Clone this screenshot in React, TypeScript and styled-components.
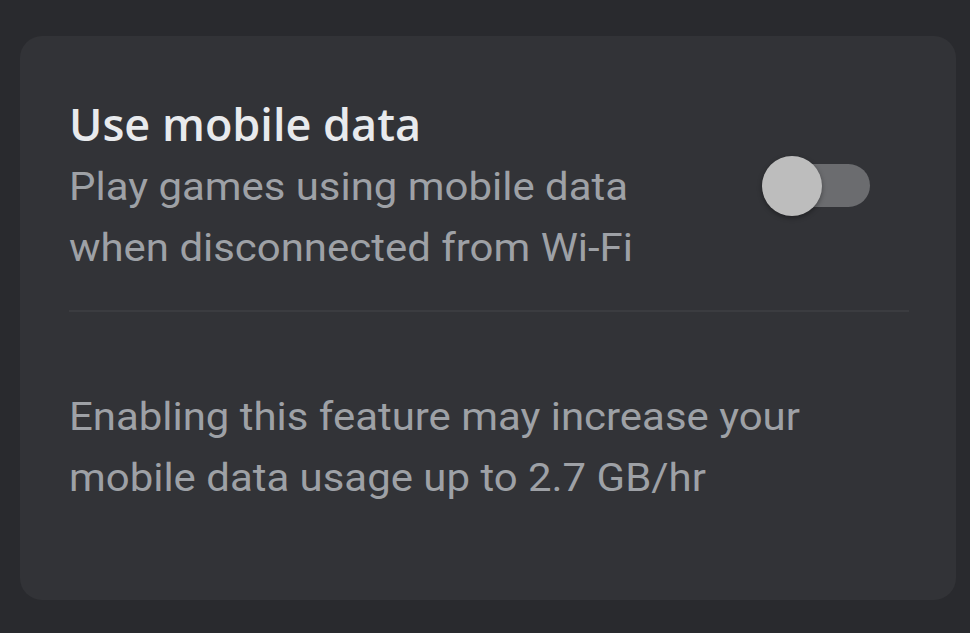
import styled, { createGlobalStyle } from "styled-components";

const GlobalStyle = createGlobalStyle`
  html, body {
    margin: 0;
    padding: 0;
    background: #292a2e;
  }
`;

const Page = styled.div`
  width: 970px;
  height: 633px;
  padding: 36px 14px 33px 20px;
  box-sizing: border-box;
`;

const Card = styled.section`
  height: 100%;
  background: #323337;
  border-radius: 22px;
  padding: 60px 47px 0 49px;
  box-sizing: border-box;
  display: flex;
  flex-direction: column;
`;

const SettingRow = styled.div`
  display: flex;
  align-items: flex-start;
  justify-content: space-between;
  padding-bottom: 31px;
  border-bottom: 2px solid #3b3c40;
`;

const TextBlock = styled.div`
  display: flex;
  flex-direction: column;
  gap: 5px;
`;

const Title = styled.h1`
  margin: 0;
  font-family: "Open Sans", "Noto Sans", sans-serif;
  font-weight: 600;
  font-size: 45px;
  line-height: 56px;
  color: #e8eaed;
`;

const Body = styled.p`
  margin: 0;
  font-family: Roboto, "Noto Sans", sans-serif;
  font-size: 39px;
  line-height: 61px;
  color: #9ea1a6;
  transform: scaleX(1.075);
  transform-origin: left center;
`;

const Switch = styled.div`
  position: relative;
  width: 108px;
  height: 60px;
  margin: 60px 39px 0 0;
  flex-shrink: 0;
`;

const Track = styled.div`
  position: absolute;
  left: 19px;
  right: 0;
  top: 8px;
  height: 43px;
  border-radius: 22px;
  background: #6b6c6f;
`;

const Thumb = styled.div`
  position: absolute;
  left: 0;
  top: 0;
  width: 60px;
  height: 60px;
  border-radius: 50%;
  background: #bdbdbd;
  box-shadow: 0 2px 5px rgba(0, 0, 0, 0.35);
`;

const Note = styled(Body)`
  padding-top: 75px;
`;

export default function App() {
  return (
    <>
      <GlobalStyle />
      <Page>
        <Card>
          <SettingRow>
            <TextBlock>
              <Title>Use mobile data</Title>
              <Body>
                Play games using mobile data
                <br />
                when disconnected from Wi-Fi
              </Body>
            </TextBlock>
            <Switch>
              <Track />
              <Thumb />
            </Switch>
          </SettingRow>
          <Note>
            Enabling this feature may increase your
            <br />
            mobile data usage up to 2.7 GB/hr
          </Note>
        </Card>
      </Page>
    </>
  );
}
